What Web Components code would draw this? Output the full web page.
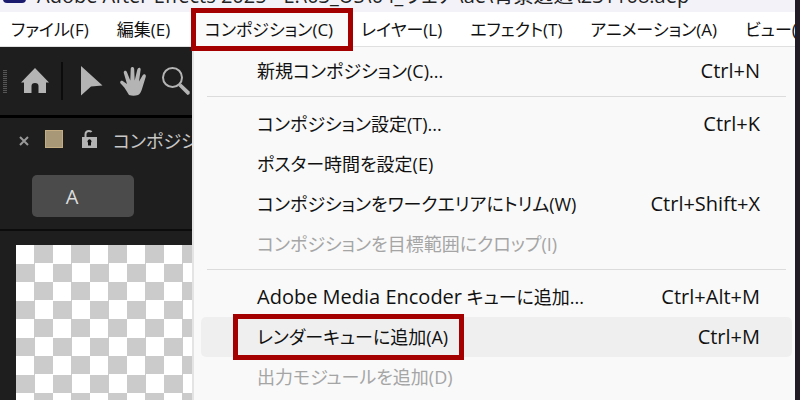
<!DOCTYPE html>
<html lang="ja">
<head>
<meta charset="utf-8">
<title>Adobe After Effects 2025</title>
<style>
    html, body {
        height : 100%;
    }
    body {
        margin : 0;
        overflow : hidden;
        background : #211c26;
        font-family : "Open Sans", "Noto Sans CJK JP", sans-serif;
        font-feature-settings : "palt";
    }
    .latin {
        font-size : 20px;
    }
</style>
</head>
<body>
<app-window>
    <title-bar slot="title">Adobe After Effects 2025 - E:\03_US\04_ウェア\ae\背景透過\231108.aep</title-bar>
    <menu-bar slot="menubar">
        <menu-title>ファイル(F)</menu-title>
        <menu-title>編集(E)</menu-title>
        <menu-title marked>コンポジション(C)</menu-title>
        <menu-title>レイヤー(L)</menu-title>
        <menu-title>エフェクト(T)</menu-title>
        <menu-title>アニメーション(A)</menu-title>
        <menu-title>ビュー(V)</menu-title>
    </menu-bar>
    <tool-bar></tool-bar>
    <comp-panel name="コンポジション" flow="A"></comp-panel>
    <drop-menu slot="menu">
        <menu-row keys="Ctrl+N">新規コンポジション(C)...</menu-row>
        <menu-line></menu-line>
        <menu-row keys="Ctrl+K">コンポジション設定(T)...</menu-row>
        <menu-row>ポスター時間を設定(E)</menu-row>
        <menu-row keys="Ctrl+Shift+X">コンポジションをワークエリアにトリム(W)</menu-row>
        <menu-row disabled>コンポジションを目標範囲にクロップ(I)</menu-row>
        <menu-line></menu-line>
        <menu-row keys="Ctrl+Alt+M"><span class="latin">Adobe Media Encoder</span> キューに追加...</menu-row>
        <menu-row keys="Ctrl+M" active marked>レンダーキューに追加(A)</menu-row>
        <menu-row disabled>出力モジュールを追加(D)</menu-row>
    </drop-menu>
</app-window>

<script>
class baseElement extends HTMLElement{
    constructor(){
        super();
        this.shadow = this.attachShadow({mode :'open'});
    }

    connectedCallback(){
        this.shadow.innerHTML = this.template();
    }
}

class appWindow extends baseElement{
    template(){
        return `
        <style>
        :host {
            display : flex;
            flex-direction : column;
            position : relative;
            height : 100%;
            margin-right : 5px;
            overflow : hidden;
            background : #1e1e1e;
        }
        .body {
            flex : 1;
            display : flex;
            flex-direction : column;
            min-height : 0;
        }
        </style>
        <slot name="title"></slot>
        <slot name="menubar"></slot>
        <div class="body"><slot></slot></div>
        <slot name="menu"></slot>
        `;
    }
}

class titleBar extends baseElement{
    template(){
        return `
        <style>
        :host {
            display : flex;
            align-items : flex-end;
            gap : 11px;
            flex : none;
            height : 3px;
            padding : 0 3px 9px;
            background : #f3f2f9;
            color : #222;
            font-size : 20px;
            line-height : 20px;
            white-space : nowrap;
        }
        .logo {
            flex : none;
            width : 23px;
            height : 22px;
            border-radius : 4px;
            background : #1a1a6e;
        }
        .name {
            height : 17px;
        }
        </style>
        <span class="logo"></span>
        <span class="name"><slot></slot></span>
        `;
    }
}

class menuBar extends baseElement{
    template(){
        return `
        <style>
        :host {
            display : flex;
            flex : none;
            height : 34px;
            border-bottom : 1px solid #e0e0e0;
            background : #fff;
        }
        </style>
        <slot></slot>
        `;
    }
}

class menuTitle extends baseElement{
    template(){
        return `
        <style>
        :host {
            display : block;
            flex : none;
            position : relative;
        }
        button {
            min-width : 88px;
            height : 34px;
            padding : 2px 17px 0 11px;
            border : 0;
            background : none;
            color : #111;
            font : inherit;
            font-size : 17px;
            line-height : 32px;
            font-feature-settings : inherit;
            text-align : left;
            white-space : nowrap;
        }
        :host([marked]) button {
            background : #fafafa;
        }
        :host([marked])::after {
            content : '';
            position : absolute;
            z-index : 2;
            inset : -4px -3px -5px -3px;
            border : 5px solid #a40000;
        }
        </style>
        <button type="button"><slot></slot></button>
        `;
    }
}

class toolBar extends baseElement{
    template(){
        return `
        <style>
        :host {
            display : flex;
            flex : none;
            align-items : center;
            height : 68px;
            padding-left : 3px;
            border-bottom : 3px solid #000;
        }
        .grip {
            width : 4px;
            height : 23px;
            background : repeating-linear-gradient(#555 0 1px, #222 1px 2px);
        }
        button {
            display : flex;
            padding : 0;
            border : 0;
            background : none;
        }
        svg {
            display : block;
            fill : #b4b4b4;
        }
        .home {
            margin : 0 12px 0 14px;
        }
        .line {
            width : 2px;
            height : 38px;
            margin-right : 18px;
            background : #0c0c0c;
        }
        .hand {
            margin : 0 16px 0 17px;
        }
        </style>
        <span class="grip"></span>
        <button class="home" type="button" aria-label="ホーム">
            <svg width="28" height="26" viewBox="0 0 28 26"><path d="M14 0 28 14.5H25V25H17.5V18Q17.5 15 14 15T10.500 18V25H3V14.500H0Z"/></svg>
        </button>
        <span class="line"></span>
        <button type="button" aria-label="選択ツール">
            <svg width="22" height="30" viewBox="0 0 22 30"><path d="M0 0 21.500 19.500 10 20.500 0 29.500Z"/></svg>
        </button>
        <button class="hand" type="button" aria-label="手のひらツール">
            <svg width="26" height="29" viewBox="0 0 26 29"><path d="M9 28C7 25 5 21 2.500 18.500L.6 16.500C-.7 14.800 1 13.200 2.700 14L7 17 3.800 6C3.300 3.500 6 2.700 6.900 5L10.300 13.500 10.700 2C10.800-.7 14-.7 14.200 2L14.700 13.500 17.200 3C18-.1 21-.1 20.600 3L19 14.500 22.500 8.500C23.800 6.200 26.500 7.300 25.700 10L22 22Q20.500 27 18 28 13.500 29.500 9 28Z"/></svg>
        </button>
        <button type="button" aria-label="ズームツール">
            <svg width="29" height="29" viewBox="0 0 29 29"><circle cx="10.500" cy="10.500" r="9.500" style="fill:none;stroke:#b4b4b4;stroke-width:2"/><path d="M16.500 19 19 16.500 27.500 24.500Q28.500 27.500 25.500 28Z"/></svg>
        </button>
        `;
    }
}

class compPanel extends baseElement{
    template(){
        return `
        <style>
        :host {
            display : flex;
            flex : 1;
            flex-direction : column;
            min-height : 0;
        }
        .tab {
            display : flex;
            align-items : center;
            height : 42px;
            padding-left : 19px;
            color : #c8c8c8;
            font-size : 18px;
            line-height : 42px;
        }
        .tab button {
            display : flex;
            padding : 0;
            border : 0;
            background : none;
        }
        .tab .close, .name {
            padding-top : 4px;
        }
        .swatch {
            width : 16px;
            height : 16px;
            margin : 0 19px 0 16px;
            border : 1px solid #c4ad83;
            background : #a89878;
        }
        .lock {
            margin-right : 16px;
        }
        .flow {
            padding : 15px 0 12px 32px;
            border-bottom : 2px solid #0c0c0c;
        }
        .flow button {
            width : 102px;
            height : 42px;
            padding : 0 22px 0 0;
            border : 0;
            border-radius : 5px;
            background : #4b4b4b;
            color : #ddd;
            font : inherit;
            font-size : 20px;
        }
        .viewer {
            flex : 1;
            margin : 14px 0 0 16px;
            background : repeating-conic-gradient(#cbcbcb 0 25%, #fff 0 50%) 0 0 / 37px 37px;
        }
        </style>
        <div class="tab">
            <button class="close" type="button" aria-label="閉じる">
                <svg width="10" height="10" viewBox="0 0 10 10" stroke="#999" stroke-width="2"><path d="M1 1 9 9M9 1 1 9"/></svg>
            </button>
            <span class="swatch"></span>
            <button class="lock" type="button" aria-label="ロック">
                <svg width="15" height="18" viewBox="0 0 15 18"><path d="M3.500 8V4.500Q3.500 1 7 1 9 1 9.500 2" fill="none" stroke="#b4b4b4" stroke-width="2"/><path d="M0 7H15V18H0Z" fill="#b4b4b4"/><path d="M6 15.500V12.700A2 2 0 1 1 9 12.700V15.500Z" fill="#111"/></svg>
            </button>
            <span class="name">${this.getAttribute('name')}</span>
        </div>
        <div class="flow"><button type="button">${this.getAttribute('flow')}</button></div>
        <div class="viewer"></div>
        `;
    }
}

class dropMenu extends baseElement{
    template(){
        return `
        <style>
        :host {
            display : block;
            position : absolute;
            top : 47px;
            right : 0;
            bottom : 0;
            left : 192px;
            padding : 4px 3px 0 7px;
            border-left : 2px solid #e4e4e4;
            background : #f9f9f9;
        }
        </style>
        <slot></slot>
        `;
    }
}

class menuRow extends baseElement{
    template(){
        var keys = this.getAttribute('keys');
        return `
        <style>
        :host {
            display : block;
            position : relative;
        }
        button {
            display : flex;
            align-items : center;
            justify-content : space-between;
            width : 100%;
            height : 40px;
            padding : 0 32px 0 56px;
            border : 0;
            border-radius : 5px;
            background : none;
            color : #111;
            font : inherit;
            font-size : 18px;
            line-height : 40px;
            font-feature-settings : inherit;
            white-space : nowrap;
        }
        button:disabled {
            color : #a5a5a5;
        }
        kbd {
            font : inherit;
            font-size : 20px;
        }
        :host([active]) button {
            background : #efefef;
        }
        :host([marked])::after {
            content : '';
            position : absolute;
            inset : -3px auto -3px 32px;
            width : 221px;
            border : 5px solid #a40000;
        }
        </style>
        <button type="button" ${this.hasAttribute('disabled') ? 'disabled' : ''}>
            <span><slot></slot></span>
            ${keys ? `<kbd>${keys}</kbd>` : ''}
        </button>
        `;
    }
}

class menuLine extends baseElement{
    template(){
        return `
        <style>
        :host {
            display : block;
            height : 13px;
            padding : 5px 6px 0;
            box-sizing : border-box;
        }
        hr {
            margin : 0;
            border : 0;
            border-top : 1px solid #dcdcdc;
        }
        </style>
        <hr>
        `;
    }
}

customElements.define('app-window', appWindow);
customElements.define('title-bar', titleBar);
customElements.define('menu-bar', menuBar);
customElements.define('menu-title', menuTitle);
customElements.define('tool-bar', toolBar);
customElements.define('comp-panel', compPanel);
customElements.define('drop-menu', dropMenu);
customElements.define('menu-row', menuRow);
customElements.define('menu-line', menuLine);
</script>
</body>
</html>
